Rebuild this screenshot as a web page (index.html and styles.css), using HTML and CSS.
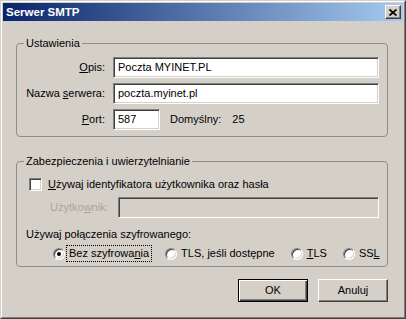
FILE: index.html
```html
<!DOCTYPE html>
<html lang="pl">
<head>
    <meta charset="UTF-8">
    <title>Serwer SMTP</title>
    <link rel="stylesheet" href="styles.css">
</head>
<body>
    <div class="window">
        <div class="frame">
            <div class="titlebar">
                <span class="title">Serwer SMTP</span>
                <span class="close">
                    <svg width="8" height="7" viewBox="0 0 8 7">
                        <path d="M0.5 0.5 L7.5 6.5 M7.5 0.5 L0.5 6.5" stroke="#000" stroke-width="1.7" fill="none"/>
                    </svg>
                </span>
            </div>
            <div class="content">
                <fieldset class="group settings">
                    <legend>Ustawienia</legend>
                    <div class="form-grid">
                        <label class="field-label"><u>O</u>pis:</label>
                        <div class="edit">Poczta MYINET.PL</div>
                        <label class="field-label">Nazwa <u>s</u>erwera:</label>
                        <div class="edit">poczta.myinet.pl</div>
                        <label class="field-label"><u>P</u>ort:</label>
                        <div class="port-row">
                            <div class="edit port">587</div>
                            <span class="default-label">Domyślny:</span>
                            <span class="default-value">25</span>
                        </div>
                    </div>
                </fieldset>

                <fieldset class="group security">
                    <legend>Zabezpieczenia i uwierzytelnianie</legend>
                    <div class="check-row">
                        <span class="checkbox"></span>
                        <span class="check-text"><u>U</u>żywaj identyfikatora użytkownika oraz hasła</span>
                    </div>
                    <div class="user-row">
                        <span class="muted">Użytko<u>w</u>nik:</span>
                        <div class="edit disabled user-edit"></div>
                    </div>
                    <div class="enc-label">Używaj połączenia szyfrowanego:</div>
                    <div class="radio-row">
                        <div class="radio-item">
                            <span class="radio checked"></span>
                            <span class="radio-text focused">Bez szyfrowa<u>n</u>ia</span>
                        </div>
                        <div class="radio-item">
                            <span class="radio"></span>
                            <span class="radio-text">TLS, jeśli dostępne</span>
                        </div>
                        <div class="radio-item">
                            <span class="radio"></span>
                            <span class="radio-text"><u>T</u>LS</span>
                        </div>
                        <div class="radio-item">
                            <span class="radio"></span>
                            <span class="radio-text">SS<u>L</u></span>
                        </div>
                    </div>
                </fieldset>

                <div class="buttons">
                    <div class="btn default">OK</div>
                    <div class="btn">Anuluj</div>
                </div>
            </div>
        </div>
    </div>
</body>
</html>
```

FILE: styles.css
```css
body {
    margin: 0;
    padding: 0;
    background-color: #d4d0c8;
    font-family: "Liberation Sans", Arial, sans-serif;
    font-size: 11px;
    line-height: 13px;
    color: #000;
}
.window {
    width: 406px;
    height: 319px;
    box-sizing: border-box;
    border: 1px solid;
    border-color: #d4d0c8 #404040 #404040 #d4d0c8;
    background-color: #d4d0c8;
}
.frame {
    height: 100%;
    box-sizing: border-box;
    border: 1px solid;
    border-color: #fff #808080 #808080 #fff;
    padding: 1px;
}
.titlebar {
    height: 18px;
    display: flex;
    align-items: center;
    justify-content: space-between;
    background: linear-gradient(to right, #0a246a, #a6caf0);
    padding: 0 2px 0 3px;
}
.title {
    color: #fff;
    font-weight: bold;
    font-size: 11.5px;
}
.close {
    width: 16px;
    height: 14px;
    box-sizing: border-box;
    display: flex;
    align-items: center;
    justify-content: center;
    background-color: #d4d0c8;
    border: 1px solid;
    border-color: #fff #404040 #404040 #fff;
    box-shadow: inset -1px -1px #808080;
}
.content {
    padding: 0 15px 0 13px;
}
.group {
    margin: 0;
    padding: 0;
    border: 1px solid #8c8c8c;
    border-radius: 4px;
}
.group legend {
    margin-left: 7px;
    padding: 0 2px;
    line-height: 13px;
}
.settings {
    margin-top: 16px;
    padding: 7px 8px 6px 0;
}
.form-grid {
    display: grid;
    grid-template-columns: 96px 266px;
    row-gap: 5px;
    align-items: center;
}
.field-label {
    text-align: right;
    padding-right: 8px;
}
.edit {
    height: 21px;
    box-sizing: border-box;
    border: 1px solid;
    border-color: #808080 #fff #fff #808080;
    box-shadow: inset 1px 1px #404040, inset -1px -1px #d4d0c8;
    background-color: #fff;
    padding: 0 4px;
    line-height: 19px;
    white-space: nowrap;
}
.edit.disabled {
    background-color: #d4d0c8;
}
.port-row {
    display: flex;
    align-items: center;
}
.edit.port {
    width: 47px;
}
.default-label {
    margin-left: 10px;
}
.default-value {
    margin-left: 11px;
}
.security {
    margin-top: 18px;
    padding: 10px 0 4px 0;
}
.check-row {
    display: flex;
    align-items: center;
    padding-left: 12px;
    height: 13px;
}
.checkbox {
    width: 13px;
    height: 13px;
    box-sizing: border-box;
    border: 1px solid;
    border-color: #808080 #fff #fff #808080;
    box-shadow: inset 1px 1px #404040, inset -1px -1px #d4d0c8;
    background-color: #fff;
}
.check-text {
    margin-left: 6px;
}
.user-row {
    display: flex;
    align-items: center;
    justify-content: space-between;
    margin-top: 6px;
    padding: 0 8px 0 33px;
}
.muted {
    color: #a7a6a0;
}
.user-edit {
    width: 261px;
}
.enc-label {
    margin-top: 10px;
    padding-left: 9px;
}
.radio-row {
    display: flex;
    align-items: center;
    gap: 13px;
    margin-top: 4px;
    padding-left: 36px;
    height: 17px;
    white-space: nowrap;
}
.radio-item {
    display: flex;
    align-items: center;
    flex-shrink: 0;
}
.radio {
    width: 12px;
    height: 12px;
    box-sizing: border-box;
    border: 1px solid;
    border-color: #808080 #fff #fff #808080;
    border-radius: 50%;
    box-shadow: inset 1px 1px #404040, inset -1px -1px #d4d0c8;
    background-color: #fff;
    margin-right: 1px;
    display: flex;
    align-items: center;
    justify-content: center;
}
.radio.checked::after {
    content: "";
    width: 4px;
    height: 4px;
    border-radius: 50%;
    background-color: #000;
}
.radio-text {
    border: 1px solid transparent;
    padding: 1px 2px;
}
.radio-text.focused {
    border: 1px dotted #000;
}
.buttons {
    display: flex;
    justify-content: flex-end;
    gap: 10px;
    margin-top: 12px;
}
.btn {
    width: 70px;
    height: 23px;
    box-sizing: border-box;
    display: flex;
    align-items: center;
    justify-content: center;
    border: 1px solid;
    border-color: #fff #404040 #404040 #fff;
    box-shadow: inset -1px -1px #808080;
}
.btn.default {
    border-color: #000;
    box-shadow: inset 1px 1px #fff, inset -1px -1px #404040, inset -2px -2px #808080;
}
```
